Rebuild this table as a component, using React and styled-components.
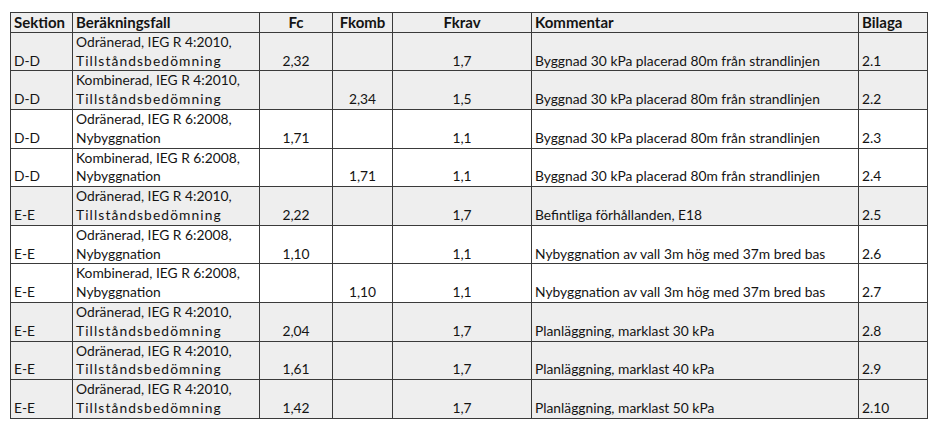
import React from "react";
import styled, { createGlobalStyle } from "styled-components";

const Global = createGlobalStyle`
  html, body { margin: 0; padding: 0; background: #ffffff; }
  body { font-family: Lato, "Liberation Sans", sans-serif; color: #141414; }
`;

const Page = styled.div`
  padding: 12px 0 0 10px;
`;

const Table = styled.table`
  border-collapse: collapse;
  table-layout: fixed;
  width: 917px;
  font-size: 13.8px;
  line-height: 18.8px;
`;

const HeadCell = styled.th`
  border: 1px solid #3a3a3a;
  background: #eeeeee;
  font-weight: 700;
  font-size: 15px;
  padding: 0 3px;
  vertical-align: middle;
  text-align: ${(p) => (p.$center ? "center" : "left")};
  white-space: nowrap;
`;

const Row = styled.tr`
  background: ${(p) => (p.$shaded ? "#eeeeee" : "#ffffff")};
`;

const Cell = styled.td`
  border: 1px solid #3a3a3a;
  padding: 0 3px;
  vertical-align: bottom;
  text-align: ${(p) => (p.$center ? "center" : "left")};
  white-space: nowrap;
`;

const Line = styled.span`
  display: block;
  letter-spacing: ${(p) => (p.$wide ? "1.1px" : "0")};
`;

const cols = [62, 187, 73, 60, 139, 327, 69];

const rows = [
  ["D-D", "Odränerad, IEG R 4:2010,", "Tillståndsbedömning", "2,32", "", "1,7", "Byggnad 30 kPa placerad 80m från strandlinjen", "2.1", true],
  ["D-D", "Kombinerad, IEG R 4:2010,", "Tillståndsbedömning", "", "2,34", "1,5", "Byggnad 30 kPa placerad 80m från strandlinjen", "2.2", true],
  ["D-D", "Odränerad, IEG R 6:2008,", "Nybyggnation", "1,71", "", "1,1", "Byggnad 30 kPa placerad 80m från strandlinjen", "2.3", false],
  ["D-D", "Kombinerad, IEG R 6:2008,", "Nybyggnation", "", "1,71", "1,1", "Byggnad 30 kPa placerad 80m från strandlinjen", "2.4", false],
  ["E-E", "Odränerad, IEG R 4:2010,", "Tillståndsbedömning", "2,22", "", "1,7", "Befintliga förhållanden, E18", "2.5", true],
  ["E-E", "Odränerad, IEG R 6:2008,", "Nybyggnation", "1,10", "", "1,1", "Nybyggnation av vall 3m hög med 37m bred bas", "2.6", false],
  ["E-E", "Kombinerad, IEG R 6:2008,", "Nybyggnation", "", "1,10", "1,1", "Nybyggnation av vall 3m hög med 37m bred bas", "2.7", false],
  ["E-E", "Odränerad, IEG R 4:2010,", "Tillståndsbedömning", "2,04", "", "1,7", "Planläggning, marklast 30 kPa", "2.8", true],
  ["E-E", "Odränerad, IEG R 4:2010,", "Tillståndsbedömning", "1,61", "", "1,7", "Planläggning, marklast 40 kPa", "2.9", true],
  ["E-E", "Odränerad, IEG R 4:2010,", "Tillståndsbedömning", "1,42", "", "1,7", "Planläggning, marklast 50 kPa", "2.10", true],
];

export default function App() {
  return (
    <>
      <Global />
      <Page>
        <Table>
          <colgroup>
            {cols.map((w, i) => (
              <col key={i} style={{ width: w }} />
            ))}
          </colgroup>
          <thead>
            <tr>
              <HeadCell>Sektion</HeadCell>
              <HeadCell>Beräkningsfall</HeadCell>
              <HeadCell $center>Fc</HeadCell>
              <HeadCell $center>Fkomb</HeadCell>
              <HeadCell $center>Fkrav</HeadCell>
              <HeadCell>Kommentar</HeadCell>
              <HeadCell>Bilaga</HeadCell>
            </tr>
          </thead>
          <tbody>
            {rows.map((r, i) => (
              <Row key={i} $shaded={r[8]}>
                <Cell>{r[0]}</Cell>
                <Cell>
                  <Line>{r[1]}</Line>
                  <Line $wide={r[2] === "Tillståndsbedömning"}>{r[2]}</Line>
                </Cell>
                <Cell $center>{r[3]}</Cell>
                <Cell $center>{r[4]}</Cell>
                <Cell $center>{r[5]}</Cell>
                <Cell>{r[6]}</Cell>
                <Cell>{r[7]}</Cell>
              </Row>
            ))}
          </tbody>
        </Table>
      </Page>
    </>
  );
}
